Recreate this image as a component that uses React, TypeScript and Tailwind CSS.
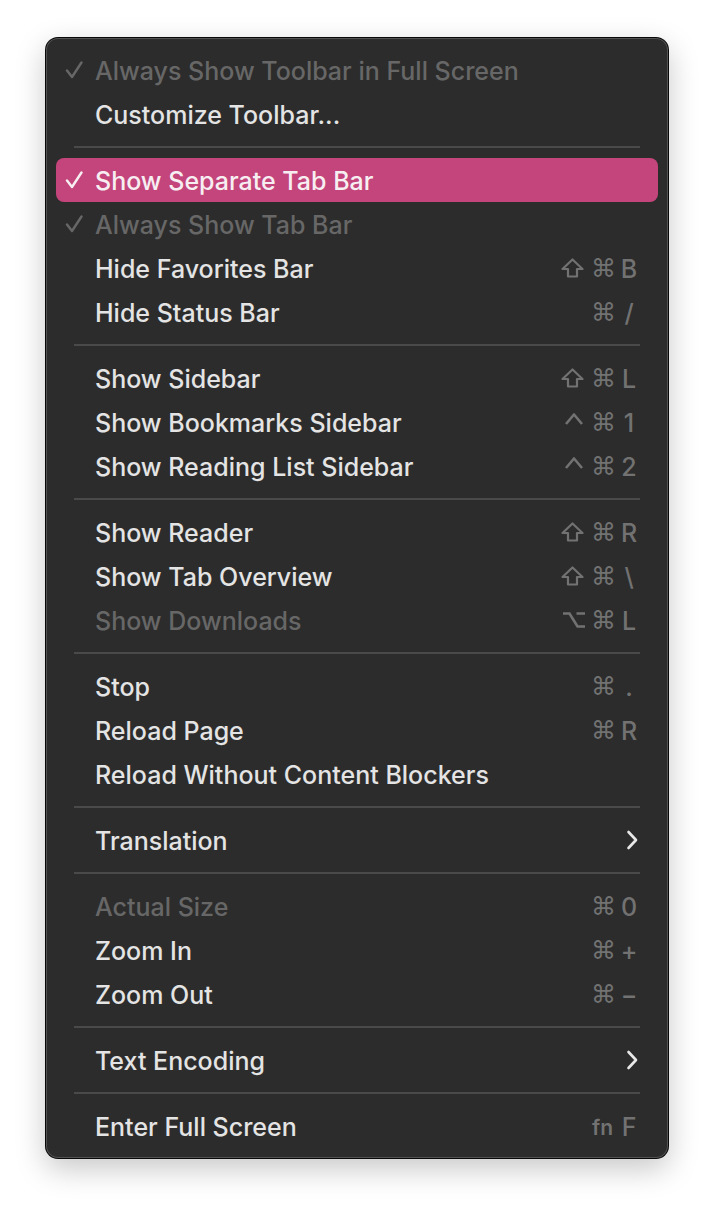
type Item =
  | { kind: "sep" }
  | {
      kind: "item";
      label: string;
      checked?: boolean;
      disabled?: boolean;
      active?: boolean;
      mods?: string[];
      keyChar?: string;
      submenu?: boolean;
    };

const items: Item[] = [
  { kind: "item", label: "Always Show Toolbar in Full Screen", checked: true, disabled: true },
  { kind: "item", label: "Customize Toolbar..." },
  { kind: "sep" },
  { kind: "item", label: "Show Separate Tab Bar", checked: true, active: true },
  { kind: "item", label: "Always Show Tab Bar", checked: true, disabled: true },
  { kind: "item", label: "Hide Favorites Bar", mods: ["shift", "cmd"], keyChar: "B" },
  { kind: "item", label: "Hide Status Bar", mods: ["cmd"], keyChar: "/" },
  { kind: "sep" },
  { kind: "item", label: "Show Sidebar", mods: ["shift", "cmd"], keyChar: "L" },
  { kind: "item", label: "Show Bookmarks Sidebar", mods: ["ctrl", "cmd"], keyChar: "1" },
  { kind: "item", label: "Show Reading List Sidebar", mods: ["ctrl", "cmd"], keyChar: "2" },
  { kind: "sep" },
  { kind: "item", label: "Show Reader", mods: ["shift", "cmd"], keyChar: "R" },
  { kind: "item", label: "Show Tab Overview", mods: ["shift", "cmd"], keyChar: "\\" },
  { kind: "item", label: "Show Downloads", disabled: true, mods: ["opt", "cmd"], keyChar: "L" },
  { kind: "sep" },
  { kind: "item", label: "Stop", mods: ["cmd"], keyChar: "." },
  { kind: "item", label: "Reload Page", mods: ["cmd"], keyChar: "R" },
  { kind: "item", label: "Reload Without Content Blockers" },
  { kind: "sep" },
  { kind: "item", label: "Translation", submenu: true },
  { kind: "sep" },
  { kind: "item", label: "Actual Size", disabled: true, mods: ["cmd"], keyChar: "0" },
  { kind: "item", label: "Zoom In", mods: ["cmd"], keyChar: "+" },
  { kind: "item", label: "Zoom Out", mods: ["cmd"], keyChar: "−" },
  { kind: "sep" },
  { kind: "item", label: "Text Encoding", submenu: true },
  { kind: "sep" },
  { kind: "item", label: "Enter Full Screen", mods: ["fn"], keyChar: "F" },
];

const GREY = "#727272";

const Check = ({ color }: { color: string }) => (
  <svg width="18" height="18" viewBox="0 0 18 18" fill="none" className="shrink-0">
    <path d="M2 9.5 L7 16 L16.5 1.5" stroke={color} strokeWidth="2.4" strokeLinecap="round" strokeLinejoin="round" />
  </svg>
);

const Chevron = () => (
  <svg width="12" height="20" viewBox="0 0 12 20" fill="none">
    <path d="M2.5 2 L10 10 L2.5 18" stroke="#e8e8e8" strokeWidth="2.6" strokeLinecap="round" strokeLinejoin="round" />
  </svg>
);

// modifier glyphs: shift / ctrl / option drawn, command as a glyph
const Modifier = ({ m }: { m: string }) => {
  if (m === "shift")
    return (
      <svg width="23" height="20" viewBox="0 0 23 20" fill="none" className="mr-[7px]">
        <path d="M11.5 1.5 L21.5 11 H16 V18.5 H7 V11 H1.5 Z" stroke={GREY} strokeWidth="2.2" strokeLinejoin="round" />
      </svg>
    );
  if (m === "ctrl")
    return (
      <svg width="20" height="14" viewBox="0 0 20 14" fill="none" className="mr-[7px] mb-[6px]">
        <path d="M2 12 L10 2.5 L18 12" stroke={GREY} strokeWidth="2.6" strokeLinejoin="round" />
      </svg>
    );
  if (m === "opt")
    return (
      <svg width="24" height="18" viewBox="0 0 24 18" fill="none" className="mr-[5px]">
        <path d="M1 2.5 H7.5 L15.5 15.5 H23 M14.5 2.5 H23" stroke={GREY} strokeWidth="2.6" />
      </svg>
    );
  if (m === "fn")
    return <span className="text-[21px] font-semibold mr-[6px] pt-[2px]">fn</span>;
  return <span className="font-['DejaVu_Sans'] text-[25px] mr-[3px]">⌘</span>;
};

const Row = ({ item }: { item: Extract<Item, { kind: "item" }> }) => {
  const textColor = item.active
    ? "text-[#f7eef2]"
    : item.disabled
      ? "text-[#676767]"
      : "text-[#e4e4e4]";
  const checkColor = item.active ? "#f7eef2" : "#676767";
  return (
    <div
      className={`flex items-center h-[44px] rounded-[8px] pl-[9px] pr-[19px] ${item.active ? "bg-[#c3457b]" : ""}`}
    >
      <div className="w-[30px] flex items-center">{item.checked && <Check color={checkColor} />}</div>
      <span className={`flex-1 text-[25px] font-medium leading-none pt-[2px] ${textColor}`}>{item.label}</span>
      {item.mods && (
        <div className="flex items-center text-[#727272] leading-none">
          {item.mods.map((m) => (
            <Modifier key={m} m={m} />
          ))}
          <span className="w-[20px] text-center text-[25px] font-medium pt-[2px]">{item.keyChar}</span>
        </div>
      )}
      {item.submenu && (
        <div className="pr-[1px]">
          <Chevron />
        </div>
      )}
    </div>
  );
};

export default function App() {
  return (
    <div className="min-h-screen bg-white pt-[37px] pl-[45px] font-['Inter','Liberation_Sans',sans-serif]">
      <div className="w-[624px] rounded-[13px] border border-black/80 bg-[#2c2c2c] shadow-[0_10px_30px_rgba(0,0,0,0.22)]">
        <div className="rounded-[12px] shadow-[inset_0_0_0_1px_rgba(255,255,255,0.18)] px-[10px] py-[10px]">
          {items.map((it, i) =>
            it.kind === "sep" ? (
              <div key={i} className="h-[22px] flex items-center px-[18px]">
                <div className="h-[2px] w-full bg-[#4a4a4a]" />
              </div>
            ) : (
              <Row key={i} item={it} />
            ),
          )}
        </div>
      </div>
    </div>
  );
}
